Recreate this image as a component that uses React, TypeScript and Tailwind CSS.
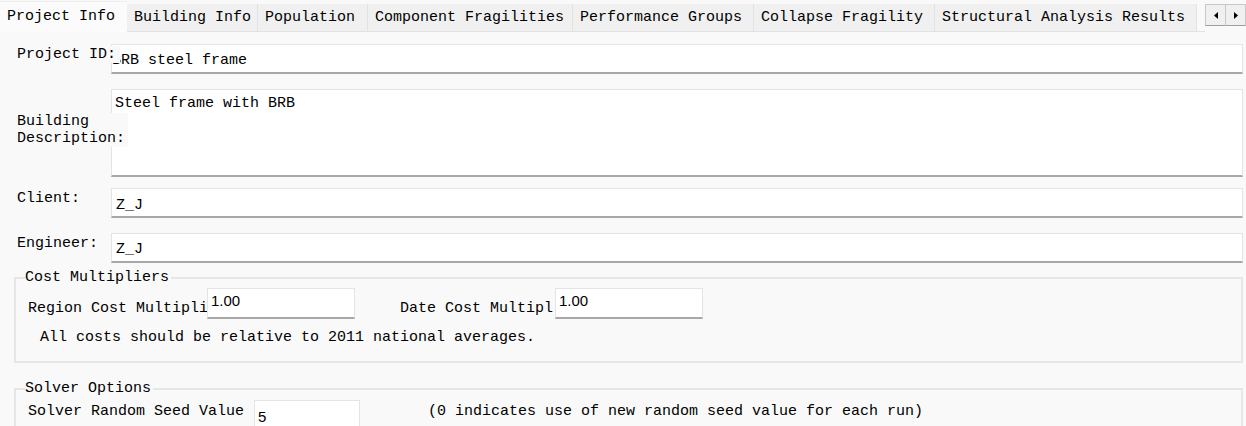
const tabs = [
  { label: 'Building Info', w: 'w-[131px]' },
  { label: 'Population', w: 'w-[110px]' },
  { label: 'Component Fragilities', w: 'w-[205px]' },
  { label: 'Performance Groups', w: 'w-[181px]' },
  { label: 'Collapse Fragility', w: 'w-[181px]' },
  { label: 'Structural Analysis Results', w: 'w-[262px]' },
]

function Field({ value, className = '' }: { value: string; className?: string }) {
  return (
    <div
      className={`bg-white border border-[#e4e4e4] border-b-2 border-b-[#a8a8a8] whitespace-nowrap overflow-hidden ${className}`}
    >
      {value}
    </div>
  )
}

function NumField({ value, className = '' }: { value: string; className?: string }) {
  return (
    <div
      className={`bg-white border border-[#e4e4e4] border-b-2 border-b-[#a8a8a8] pl-[3px] pt-[4px] font-['Liberation_Sans'] text-[15px] leading-[16px] ${className}`}
    >
      {value}
    </div>
  )
}

export default function App() {
  return (
    <div className="w-[1246px] h-[426px] overflow-hidden bg-[#f9f9f9] text-black font-['Liberation_Mono',monospace] text-[15px] leading-[17px]">
      {/* tab strip */}
      <div className="h-[32px] flex items-end">
        <div className="h-[31px] w-[127px] pl-[7px] pt-[6px] bg-[#fbfbfb] border-t border-[#eeeeee]">Project Info</div>
        {tabs.map((t) => (
          <div
            key={t.label}
            className={`${t.w} h-[28px] pl-[7px] pt-[5px] bg-[#f0f0f0] border-r border-b border-[#e2e2e2] whitespace-nowrap`}
          >
            {t.label}
          </div>
        ))}
        <div className="flex-1 h-[28px] border-b border-[#e2e2e2]" />
        <div className="self-start mt-[4px] flex">
          <div className="w-[21px] h-[22px] bg-[#f0f0f0] border border-[#c8c8c8] border-b-[#a0a0a0] flex items-center justify-center">
            <svg width="4" height="7" viewBox="0 0 4 7"><path d="M4 0L0 3.5L4 7Z" fill="#000" /></svg>
          </div>
          <div className="w-[20px] h-[22px] bg-[#f0f0f0] border border-l-0 border-[#c8c8c8] border-b-[#a0a0a0] flex items-center justify-center">
            <svg width="4" height="7" viewBox="0 0 4 7"><path d="M0 0L4 3.5L0 7Z" fill="#000" /></svg>
          </div>
        </div>
      </div>

      {/* content */}
      <div className="pt-[12px] pr-[3px]">
        <div className="flex items-center h-[30px]">
          <div className="w-[111px] pl-[17px] -mt-[10px] whitespace-nowrap relative z-10">
            <span className="bg-[#f9f9f9] pr-[4px]">Project ID:</span>
          </div>
          <Field value="BRB steel frame" className="flex-1 h-[30px] pl-0 pt-[7px]" />
        </div>

        <div className="flex items-center mt-[15px]">
          <div className="w-[111px] pl-[17px] -mt-[6px] whitespace-nowrap relative z-10">
            <div className="bg-[#f9f9f9] w-[111px]">
              Building
              <br />
              Description:
            </div>
          </div>
          <Field value="Steel frame with BRB" className="flex-1 h-[88px] pl-[3px] pt-[5px]" />
        </div>

        <div className="flex items-center mt-[11px] h-[30px]">
          <div className="w-[111px] pl-[17px] -mt-[10px]">Client:</div>
          <Field value="Z_J" className="flex-1 h-[30px] pl-[4px] pt-[8px]" />
        </div>

        <div className="flex items-center mt-[15px] h-[30px]">
          <div className="w-[111px] pl-[17px] -mt-[10px]">Engineer:</div>
          <Field value="Z_J" className="flex-1 h-[30px] pl-[4px] pt-[7px]" />
        </div>

        <fieldset className="ml-[14px] mt-[6px] h-[94px] border-2 border-[#e6e6e6] px-[12px]">
          <legend className="-ml-[3px] pr-[2px]">Cost Multipliers</legend>
          <div className="flex items-center mt-[2px]">
            <div className="w-[179px] whitespace-nowrap overflow-hidden mt-[9px]">Region Cost Multipli</div>
            <NumField value="1.00" className="w-[148px] h-[31px]" />
            <div className="ml-[45px] w-[155px] whitespace-nowrap overflow-hidden mt-[9px]">Date Cost Multipl</div>
            <NumField value="1.00" className="w-[148px] h-[31px]" />
          </div>
          <div className="pl-[12px] mt-[10px]">All costs should be relative to 2011 national averages.</div>
        </fieldset>

        <fieldset className="ml-[14px] mt-[17px] h-[60px] border-2 border-[#e6e6e6] px-[12px]">
          <legend className="-ml-[3px] pr-[2px]">Solver Options</legend>
          <div className="flex items-start mt-[3px]">
            <div className="w-[226px] whitespace-nowrap mt-[3px]">Solver Random Seed Value</div>
            <div className="w-[106px] h-[30px] bg-white border border-[#e4e4e4] pl-[3px] pt-[8px] font-['Liberation_Sans'] text-[15px] leading-[16px]">5</div>
            <div className="ml-[68px] whitespace-nowrap mt-[3px]">(0 indicates use of new random seed value for each run)</div>
          </div>
        </fieldset>
      </div>
    </div>
  )
}
